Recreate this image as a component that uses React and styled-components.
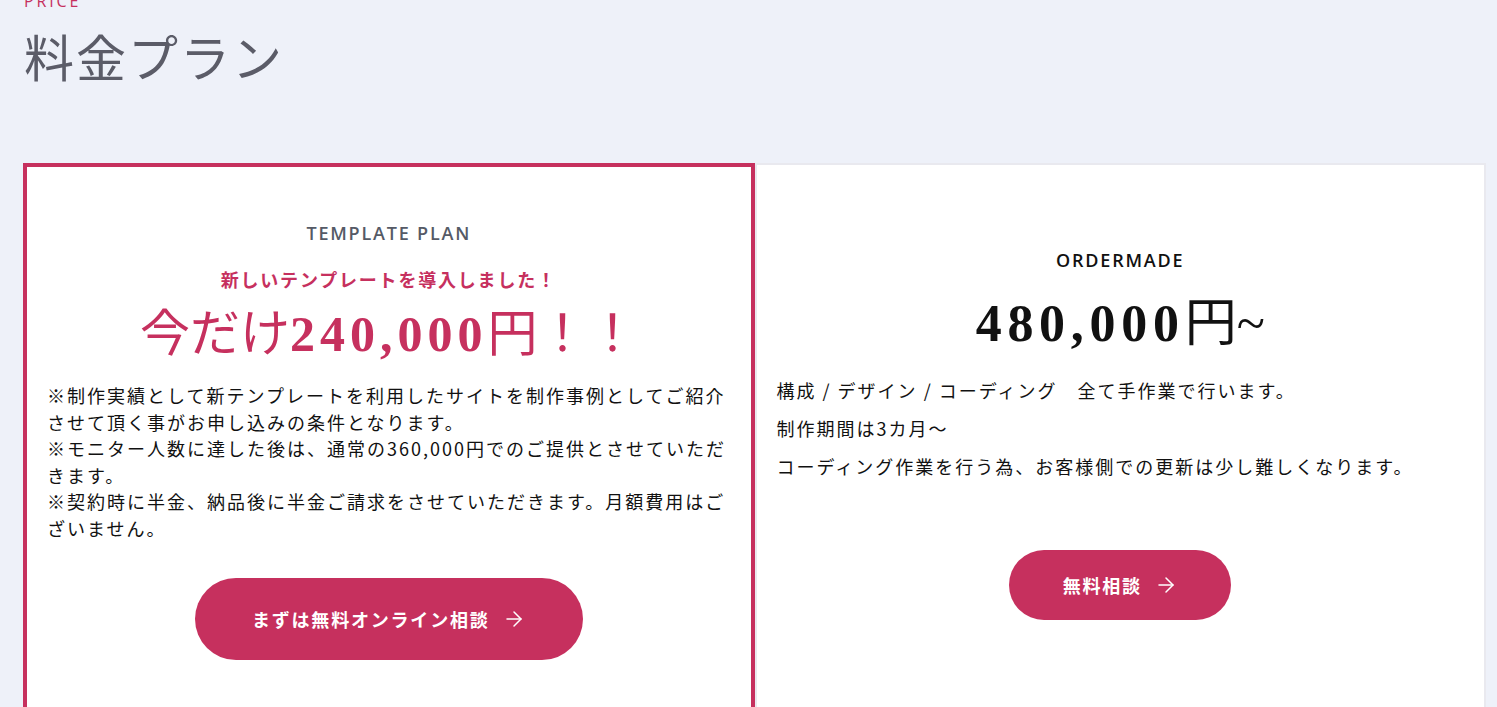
import React from 'react'
import styled, { createGlobalStyle } from 'styled-components'
import { ArrowRight } from 'lucide-react'

const Global = createGlobalStyle`
  html, body {
    margin: 0;
    padding: 0;
    background: #eef1f9;
    overflow: hidden;
  }
  body {
    font-family: "Noto Sans CJK JP", "Noto Sans", sans-serif;
    color: #111;
  }
`

const Section = styled.section`
  padding: 0 11px 0 23px;
  height: 707px;
  overflow: hidden;
`

const Label = styled.div`
  margin-top: -9px;
  padding-left: 1px;
  font-family: "Open Sans", sans-serif;
  font-size: 16px;
  line-height: 20px;
  letter-spacing: 0.18em;
  color: #c6305e;
`

const Heading = styled.h2`
  margin: 14px 0 0 1px;
  font-family: "Noto Sans CJK JP", serif;
  font-weight: 400;
  font-size: 50px;
  line-height: 60px;
  letter-spacing: 0.04em;
  color: #5b5c68;
`

const Plans = styled.div`
  margin-top: 78px;
  display: grid;
  grid-template-columns: 1fr 1fr;
  align-items: stretch;
`

const Card = styled.div`
  background: #fff;
  border: ${p => (p.$featured ? '4px solid #c6305e' : '2px solid #e9e9ef')};
  padding: ${p => p.$pt}px 20px 60px;
  display: flex;
  flex-direction: column;
  align-items: center;
`

const PlanName = styled.div`
  font-family: "Open Sans", sans-serif;
  font-weight: 600;
  font-size: 18px;
  line-height: 27px;
  letter-spacing: 0.1em;
  color: ${p => p.$color};
`

const Catch = styled.div`
  margin-top: 19px;
  font-weight: 700;
  font-size: 18px;
  line-height: 27px;
  letter-spacing: 0.1em;
  color: #c6305e;
`

const Price = styled.div`
  margin-top: ${p => p.$mt}px;
  font-family: "Liberation Serif", "Noto Sans CJK JP", serif;
  font-size: ${p => p.$size}px;
  line-height: 1.2;
  color: ${p => p.$color};
  white-space: nowrap;
`

const Num = styled.span`
  font-family: "Liberation Serif", serif;
  font-weight: 700;
  letter-spacing: ${p => p.$ls || 0.1}em;
`

const Body = styled.div`
  align-self: stretch;
  margin-top: ${p => p.$mt}px;
  font-size: 18px;
  line-height: 26.5px;
  letter-spacing: 2px;
  color: #111;

  p {
    margin: 0 0 ${p => p.$gap}px;
  }
`

const Button = styled.a`
  margin-top: ${p => p.$mt}px;
  width: ${p => p.$w}px;
  height: ${p => p.$h}px;
  border-radius: ${p => p.$h / 2}px;
  background: #c6305e;
  color: #fff;
  display: flex;
  align-items: center;
  justify-content: center;
  gap: 12px;
  font-weight: 700;
  font-size: 18px;
  letter-spacing: 0.1em;
  text-decoration: none;
  flex-shrink: 0;
`

export default function App() {
  return (
    <>
      <Global />
      <Section>
        <Label>PRICE</Label>
        <Heading>料金プラン</Heading>
        <Plans>
          <Card $featured $pt={53}>
            <PlanName $color="#555a66">TEMPLATE PLAN</PlanName>
            <Catch>新しいテンプレートを導入しました！</Catch>
            <Price $mt={11} $size={50} $color="#c6305e">
              今だけ<Num>240,000</Num>円！！
            </Price>
            <Body $mt={18} $gap={0}>
              <p>※制作実績として新テンプレートを利用したサイトを制作事例としてご紹介させて頂く事がお申し込みの条件となります。</p>
              <p>※モニター人数に達した後は、通常の360,000円でのご提供とさせていただきます。</p>
              <p>※契約時に半金、納品後に半金ご請求をさせていただきます。月額費用はございません。</p>
            </Body>
            <Button $mt={37} $w={388} $h={82} href="#">
              まずは無料オンライン相談
              <ArrowRight size={24} strokeWidth={1.5} />
            </Button>
          </Card>
          <Card $pt={82}>
            <PlanName $color="#111">ORDERMADE</PlanName>
            <Price $mt={19} $size={52} $color="#111">
              <Num $ls={0.11}>480,000</Num>円~
            </Price>
            <Body $mt={22} $gap={11.5}>
              <p>構成 / デザイン / コーディング　全て手作業で行います。</p>
              <p>制作期間は3カ月～</p>
              <p>コーディング作業を行う為、お客様側での更新は少し難しくなります。</p>
            </Body>
            <Button $mt={59} $w={222} $h={70} href="#">
              無料相談
              <ArrowRight size={24} strokeWidth={1.5} />
            </Button>
          </Card>
        </Plans>
      </Section>
    </>
  )
}
